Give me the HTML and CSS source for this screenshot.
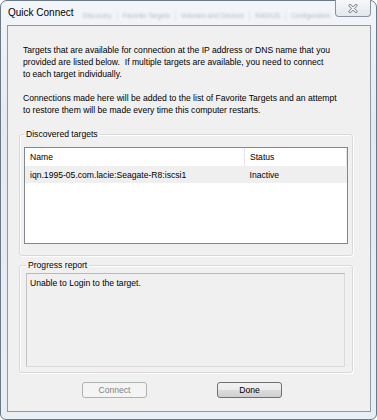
FILE: index.html
```html
<!DOCTYPE html>
<html lang="en">
<head>
    <meta charset="UTF-8">
    <meta name="viewport" content="width=device-width, initial-scale=1.0">
    <title>Quick Connect</title>
    <link rel="stylesheet" href="styles.css">
</head>
<body>

    <div class="window">
        <div class="titlebar">
            <span class="title">Quick Connect</span>
            <div class="glass-tabs">
                <span>Discovery</span>
                <span>Favorite Targets</span>
                <span>Volumes and Devices</span>
                <span>RADIUS</span>
                <span>Configuration</span>
            </div>
            <button class="close-btn" aria-label="Close">
                <svg width="10" height="9" viewBox="0 0 10 9">
                    <path d="M2 1.5 L8 7.5 M8 1.5 L2 7.5" stroke="#7a7f86" stroke-width="3" stroke-linecap="round"/>
                    <path d="M2 1.5 L8 7.5 M8 1.5 L2 7.5" stroke="#ffffff" stroke-width="1.2" stroke-linecap="round"/>
                </svg>
            </button>
        </div>

        <div class="client">
            <p class="intro">Targets that are available for connection at the IP address or DNS name that you<br>provided are listed below.&nbsp; If multiple targets are available, you need to connect<br>to each target individually.</p>
            <p class="intro second">Connections made here will be added to the list of Favorite Targets and an attempt<br>to restore them will be made every time this computer restarts.</p>

            <fieldset class="group">
                <legend>Discovered targets</legend>
                <div class="list-box">
                    <table class="target-table">
                        <thead>
                            <tr>
                                <th class="col-name">Name</th>
                                <th>Status</th>
                            </tr>
                        </thead>
                        <tbody>
                            <tr class="selected">
                                <td>iqn.1995-05.com.lacie:Seagate-R8:iscsi1</td>
                                <td>Inactive</td>
                            </tr>
                        </tbody>
                    </table>
                </div>
            </fieldset>

            <fieldset class="group progress">
                <legend>Progress report</legend>
                <div class="report">Unable to Login to the target.</div>
            </fieldset>

            <div class="actions">
                <button class="btn" disabled>Connect</button>
                <button class="btn default">Done</button>
            </div>
        </div>
    </div>

</body>
</html>
```

FILE: styles.css
```css
body {
    margin: 0;
    font-family: "Liberation Sans", Arial, sans-serif;
    font-size: 8.6px;
    color: #000;
    background: #fff;
}

.window {
    width: 377px;
    height: 420px;
    box-sizing: border-box;
    border: 1px solid #6b7886;
    border-radius: 7px 7px 6px 6px;
    background: linear-gradient(#f3f6f9, #e4eaf0 30%, #e9eef3);
    padding: 0 5px 7px 6px;
    display: flex;
    flex-direction: column;
}

/* title bar */
.titlebar {
    height: 24px;
    display: flex;
    align-items: flex-start;
}

.title {
    margin-top: 6px;
    margin-left: 1px;
    font-size: 10px;
    line-height: 12px;
    white-space: nowrap;
}

.glass-tabs {
    display: flex;
    margin-top: 10px;
    margin-left: 4px;
    filter: blur(1.2px);
    opacity: 0.45;
    color: #6c7480;
    font-size: 6.6px;
    line-height: 10px;
    white-space: nowrap;
    flex: 1;
}

    .glass-tabs span {
        padding: 0 5px;
        border-right: 1px solid #c9d0d8;
    }

        .glass-tabs span:last-child {
            border-right: none;
        }

.close-btn {
    margin-left: auto;
    margin-top: -1px;
    width: 38px;
    height: 17px;
    padding: 0;
    border: 1px solid #8a939d;
    border-top: none;
    border-radius: 0 0 4px 4px;
    background: linear-gradient(#f6f8fa, #e3e8ee);
    display: flex;
    align-items: center;
    justify-content: center;
}

/* client area */
.client {
    flex: 1;
    box-sizing: border-box;
    border: 1px solid #8f99a5;
    background: #f0f0f0;
    padding: 18px 17px 0 11px;
    display: flex;
    flex-direction: column;
}

.intro {
    margin: 0 0 0 4px;
    line-height: 12px;
    white-space: nowrap;
}

.intro.second {
    margin-top: 12px;
}

.group {
    margin: 13px 0 0 0;
    padding: 8px 4px 11px 4px;
    border: 1px solid #d9d9d9;
    border-radius: 3px;
    box-shadow: inset 1px 1px 0 #fff, 1px 1px 0 #fff;
    min-width: 0;
}

    .group legend {
        padding: 0 2px;
        margin-left: 0;
        line-height: 10px;
    }

.group.progress {
    margin-top: 4px;
    padding: 3px 7px 5px 6px;
}

.list-box {
    height: 97px;
    box-sizing: border-box;
    border: 1px solid #828790;
    background: #fff;
}

.target-table {
    width: 100%;
    border-collapse: collapse;
}

    .target-table th {
        height: 18px;
        padding: 0 0 0 5px;
        text-align: left;
        font-weight: normal;
        border-right: 1px solid #e5e5e5;
    }

    .target-table .col-name {
        width: 214px;
    }

    .target-table td {
        height: 17px;
        padding: 0 0 0 5px;
    }

    .target-table tr.selected td {
        background-color: #efefef;
    }

.report {
    height: 94px;
    box-sizing: border-box;
    border: 1px solid #dadada;
    border-top-color: #b9b9b9;
    border-left-color: #c4c4c4;
    padding: 4px 3px;
    line-height: 10px;
}

.actions {
    display: flex;
    gap: 70px;
    margin-top: 9px;
    padding-left: 63px;
}

.btn {
    width: 65px;
    height: 16px;
    padding: 0;
    font-family: inherit;
    font-size: 8.6px;
    border: 1px solid #707070;
    border-radius: 3px;
    background: linear-gradient(#f2f2f2 0%, #ebebeb 50%, #dddddd 50%, #cfcfcf 100%);
    color: #000;
}

    .btn:disabled {
        border-color: #adb2b5;
        background: #f4f4f4;
        color: #838383;
    }
```
